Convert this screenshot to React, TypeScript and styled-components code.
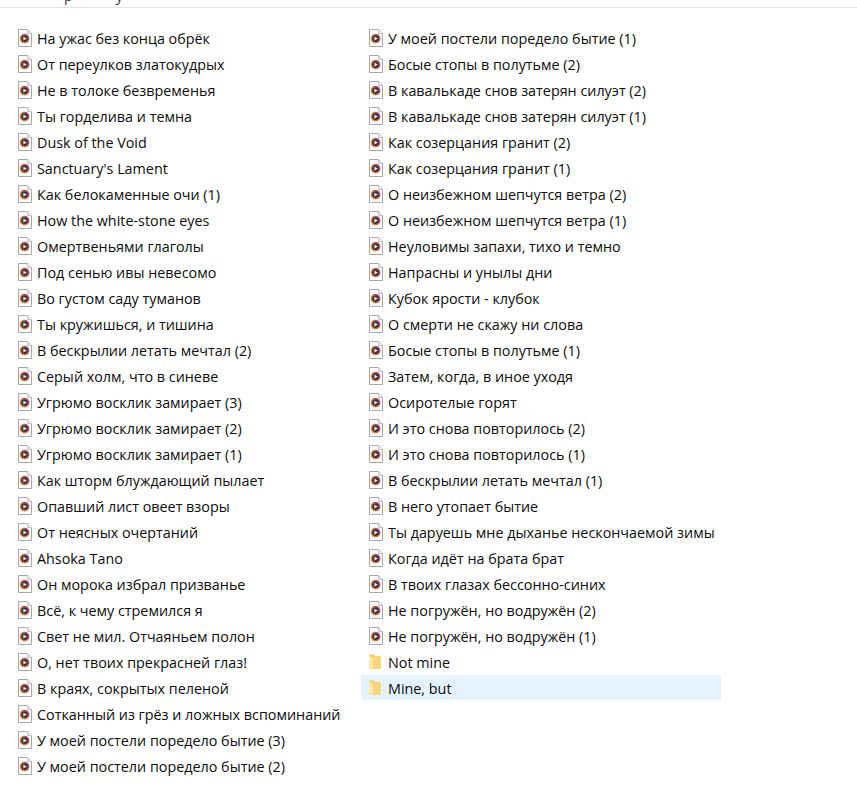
import React from "react";
import styled, { createGlobalStyle } from "styled-components";

const Global = createGlobalStyle`
  html, body { margin: 0; padding: 0; background: #fff; overflow: hidden; }
  body { font-family: "Open Sans", "Noto Sans", sans-serif; }
`;

const Page = styled.div`
  width: 857px;
  height: 799px;
  overflow: hidden;
  background: #fff;
`;

const TopBar = styled.div`
  height: 7px;
  overflow: hidden;
  border-bottom: 1px solid #e3e3e3;
  display: flex;
  align-items: flex-end;
`;

const CutOffText = styled.div`
  display: flex;
  gap: 43px;
  padding-left: 64px;
  font-size: 14.35px;
  line-height: 14px;
  color: #333;
  transform: translateY(-4px);
`;

const Columns = styled.div`
  display: flex;
  padding: 17px 0 0 10px;
`;

const Column = styled.ul`
  list-style: none;
  margin: 0;
  padding: 0;
  width: 351px;
`;

const Row = styled.li<{ $selected?: boolean }>`
  height: 25px;
  margin-bottom: 1px;
  width: 360px;
  display: flex;
  align-items: center;
  gap: 5px;
  padding-left: 8px;
  box-sizing: border-box;
  background: ${(p) => (p.$selected ? "#e5f3ff" : "transparent")};
`;

const Label = styled.span`
  font-family: "Open Sans", "Noto Sans", sans-serif;
  font-size: 14.35px;
  color: #0d0d0d;
  white-space: nowrap;
  transform: translateY(1px);
`;

const IconSlot = styled.svg`
  flex: none;
  width: 14px;
  height: 18px;
`;

const FolderSlot = styled.svg`
  flex: none;
  width: 14px;
  height: 16px;
`;

const FileIcon = () => (
  <IconSlot viewBox="0 0 14 18">
    <defs>
      <linearGradient id="discRing" x1="0" y1="0.8" x2="1" y2="0.2">
        <stop offset="0" stopColor="#f08a20" />
        <stop offset="0.6" stopColor="#d0653c" />
        <stop offset="1" stopColor="#8e4fb0" />
      </linearGradient>
    </defs>
    <path d="M.5.5h9.2l3.8 3.8v13.2H.5z" fill="#fff" stroke="#a8a8a8" />
    <path d="M9.5.5v4h4" fill="#ececec" stroke="#c6c6c6" />
    <circle cx="6.6" cy="9.6" r="4.9" fill="url(#discRing)" />
    <circle cx="6.6" cy="9.6" r="3.4" fill="#3d3640" />
    <path d="M5.4 7.7l3.4 1.9-3.4 1.9z" fill="#f4f0f4" />
  </IconSlot>
);

const FolderIcon = () => (
  <FolderSlot viewBox="0 0 14 16">
    <path d="M0 0.5h5l1 1.5h6v12.5H0z" fill="#f2cd6c" />
    <path d="M0 2l4 1.5V15.5L0 14.5z" fill="#fde7a4" />
    <path d="M4 3.5l8-1.5v12.5l-8 1z" fill="#f7d680" />
  </FolderSlot>
);

const left = ["На ужас без конца обрёк","От переулков златокудрых","Не в толоке безвременья","Ты горделива и темна","Dusk of the Void","Sanctuary's Lament","Как белокаменные очи (1)","How the white-stone eyes","Омертвеньями глаголы","Под сенью ивы невесомо","Во густом саду туманов","Ты кружишься, и тишина","В бескрылии летать мечтал (2)","Серый холм, что в синеве","Угрюмо восклик замирает (3)","Угрюмо восклик замирает (2)","Угрюмо восклик замирает (1)","Как шторм блуждающий пылает","Опавший лист овеет взоры","От неясных очертаний","Ahsoka Tano","Он морока избрал призванье","Всё, к чему стремился я","Свет не мил. Отчаяньем полон","О, нет твоих прекрасней глаз!","В краях, сокрытых пеленой","Сотканный из грёз и ложных вспоминаний","У моей постели поредело бытие (3)","У моей постели поредело бытие (2)"];
const right = ["У моей постели поредело бытие (1)","Босые стопы в полутьме (2)","В кавалькаде снов затерян силуэт (2)","В кавалькаде снов затерян силуэт (1)","Как созерцания гранит (2)","Как созерцания гранит (1)","О неизбежном шепчутся ветра (2)","О неизбежном шепчутся ветра (1)","Неуловимы запахи, тихо и темно","Напрасны и унылы дни","Кубок ярости - клубок","О смерти не скажу ни слова","Босые стопы в полутьме (1)","Затем, когда, в иное уходя","Осиротелые горят","И это снова повторилось (2)","И это снова повторилось (1)","В бескрылии летать мечтал (1)","В него утопает бытие","Ты даруешь мне дыханье нескончаемой зимы","Когда идёт на брата брат","В твоих глазах бессонно-синих","Не погружён, но водружён (2)","Не погружён, но водружён (1)"];

export default function App() {
  return (
    <Page>
      <Global />
      <TopBar>
        <CutOffText><span>р</span><span>у</span></CutOffText>
      </TopBar>
      <Columns>
        <Column>
          {left.map((t) => (
            <Row key={t}><FileIcon /><Label>{t}</Label></Row>
          ))}
        </Column>
        <Column>
          {right.map((t) => (
            <Row key={t}><FileIcon /><Label>{t}</Label></Row>
          ))}
          <Row><FolderIcon /><Label>Not mine</Label></Row>
          <Row $selected><FolderIcon /><Label>Mine, but</Label></Row>
        </Column>
      </Columns>
    </Page>
  );
}
